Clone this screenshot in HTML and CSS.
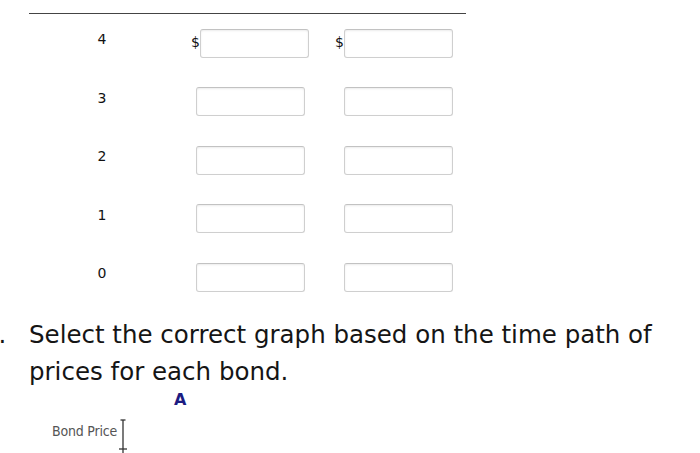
FILE: index.html
```html
<!DOCTYPE html>
<html>
<head>
  <meta charset="utf-8" />
  <title>Bond prices</title>
  <link rel="stylesheet" href="styles.css">
</head>
<body>
  <div class="rule"></div>

  <div class="price-table">
    <div class="year">4</div>
    <div class="cell first"><span class="dollar">$</span><input class="box" type="text"></div>
    <div class="cell second"><span class="dollar">$</span><input class="box" type="text"></div>

    <div class="year">3</div>
    <div class="cell first"><input class="box" type="text"></div>
    <div class="cell second"><input class="box" type="text"></div>

    <div class="year">2</div>
    <div class="cell first"><input class="box" type="text"></div>
    <div class="cell second"><input class="box" type="text"></div>

    <div class="year">1</div>
    <div class="cell first"><input class="box" type="text"></div>
    <div class="cell second"><input class="box" type="text"></div>

    <div class="year">0</div>
    <div class="cell first"><input class="box" type="text"></div>
    <div class="cell second"><input class="box" type="text"></div>
  </div>

  <div class="question">
    <span class="label">b.</span>
    <p>Select the correct graph based on the time path of prices for each bond.</p>
  </div>

  <div class="graph-title">A</div>

  <div class="graph">
    <span class="axis-label">Bond Price</span>
    <svg class="axis" width="12" height="34" viewBox="0 0 12 34">
      <line x1="6" y1="1" x2="6" y2="34" stroke="#333" stroke-width="1.3" />
      <line x1="3.5" y1="1" x2="8.5" y2="1" stroke="#333" stroke-width="1.3" />
      <line x1="2" y1="30" x2="10" y2="30" stroke="#333" stroke-width="1.3" />
    </svg>
  </div>
</body>
</html>
```

FILE: styles.css
```css
* {
  margin: 0;
  padding: 0;
  box-sizing: border-box;
}

body {
  background: #fff;
  color: #111;
  font-family: 'DejaVu Sans', Verdana, sans-serif;
  width: 700px;
  height: 453px;
  overflow: hidden;
}

.rule {
  margin: 13px 0 0 29px;
  width: 437px;
  border-top: 1.5px solid #444;
}

.price-table {
  display: grid;
  grid-template-columns: 146px 150px 128px;
  grid-auto-rows: 58.5px;
  margin-left: 29px;
  align-items: center;
}

.year {
  text-align: center;
  font-size: 14px;
  padding-bottom: 8px;
}

.cell {
  display: flex;
  align-items: center;
}

.cell.first {
  justify-self: center;
}

.cell.second {
  justify-self: end;
}

.dollar {
  font-size: 14px;
  width: 9px;
  padding-bottom: 2px;
}

.box {
  width: 109px;
  height: 29px;
  border: 1px solid #cfcfcf;
  border-top-color: #c2c2c2;
  border-radius: 3px;
  box-shadow: inset 0 1px 2px rgba(0, 0, 0, 0.08);
  background: #fff;
}

.question {
  display: flex;
  margin: 9px 0 0 -17px;
  font-size: 24.5px;
  line-height: 37px;
  color: #151515;
}

.question .label {
  width: 46px;
  flex: none;
}

.question p {
  width: 640px;
}

.graph-title {
  margin: 0 0 0 174px;
  font-size: 16px;
  font-weight: bold;
  color: #1c1c82;
  line-height: 20px;
}

.graph {
  display: flex;
  align-items: flex-start;
  margin: 9px 0 0 52px;
}

.axis-label {
  font-family: 'DejaVu Sans Condensed', 'DejaVu Sans', sans-serif;
  font-size: 14px;
  color: #555;
  margin-top: 4px;
  letter-spacing: -0.2px;
}

.axis {
  margin-left: 0;
}
```
